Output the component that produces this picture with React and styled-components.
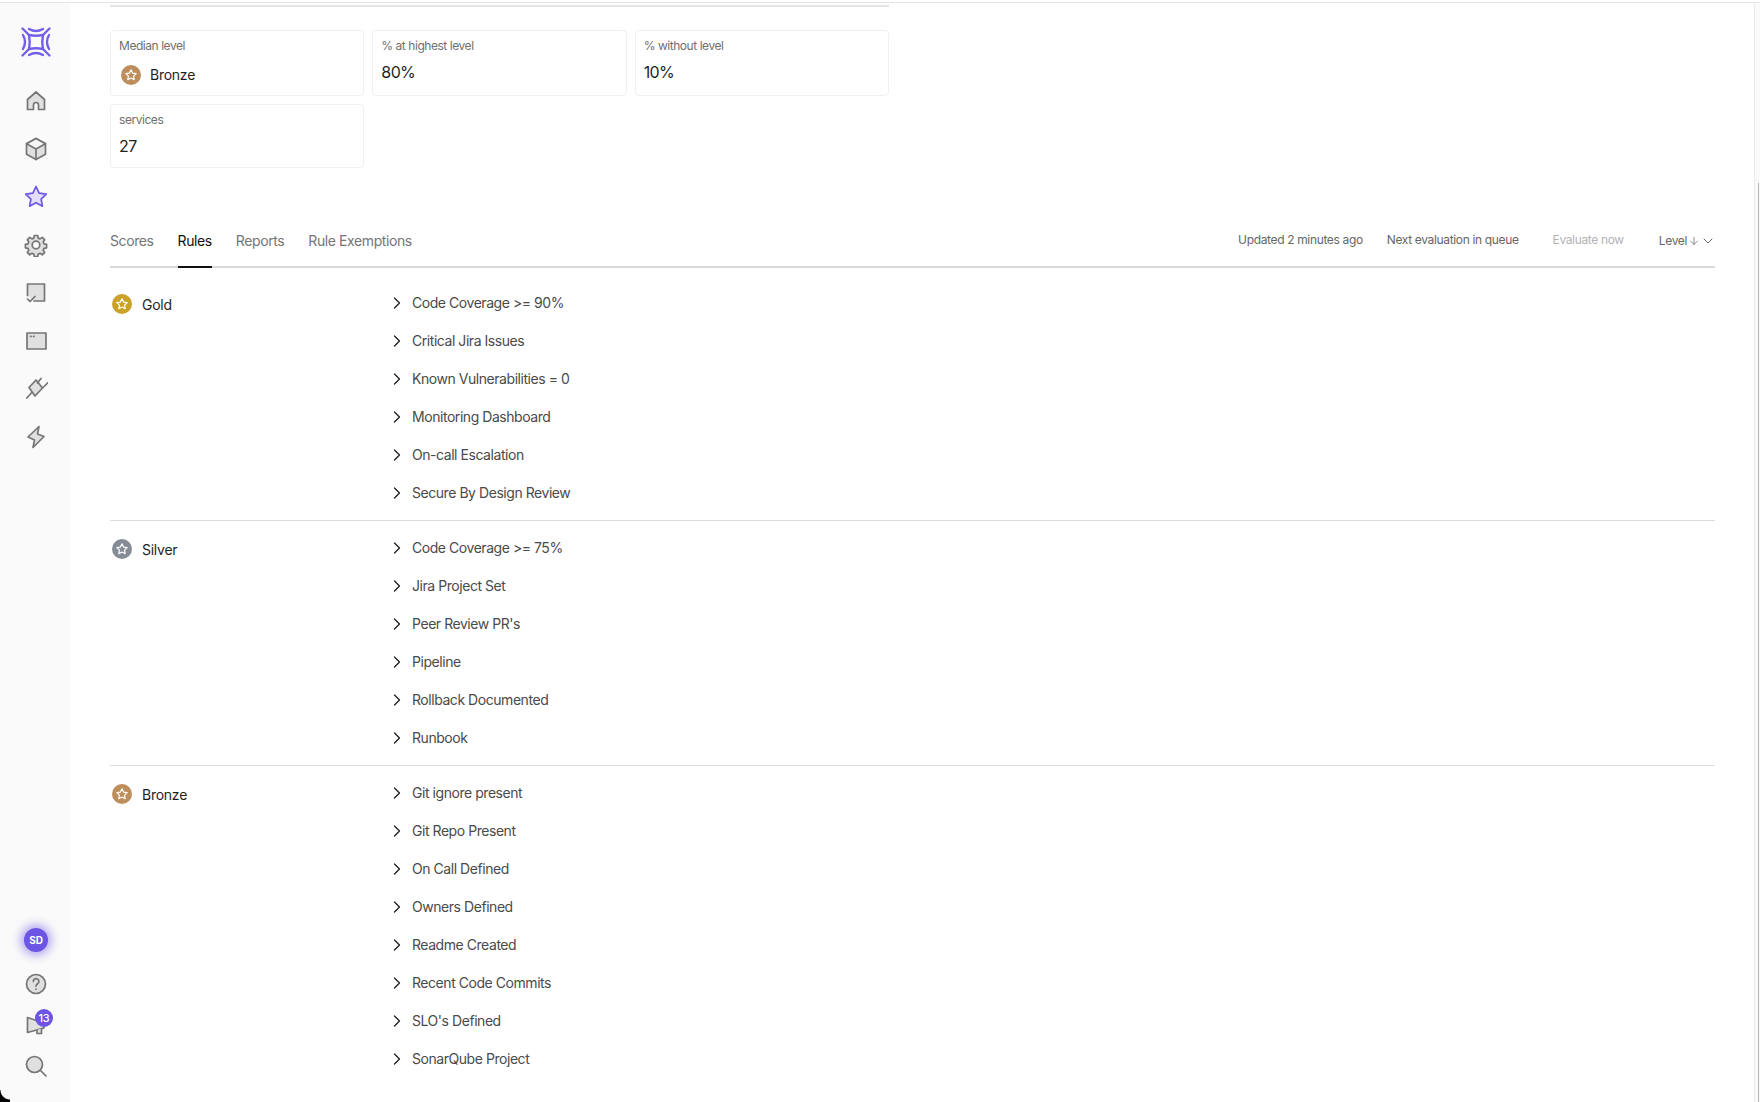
import React from "react";
import styled, { createGlobalStyle } from "styled-components";
import { ChevronRight, ChevronDown, ArrowDown } from "lucide-react";

const Global = createGlobalStyle`
  html, body { margin: 0; padding: 0; background: #fff; height: 100%; overflow: hidden; }
  body { font-family: Inter, "Liberation Sans", sans-serif; color: #1f1f1f; }
`;

const Page = styled.div`
  width: 1760px;
  height: 1102px;
  display: flex;
  overflow: hidden;
  background: #fff;
  position: relative;
  box-sizing: border-box;
  padding-top: 2px;
`;

const Sidebar = styled.aside`
  width: 70px;
  flex: none;
  background: #fafafa;
  display: flex;
  flex-direction: column;
  align-items: center;
  padding-top: 27px;
  padding-left: 2px;
  box-sizing: border-box;
  border-top: 1px solid #e4e4e4;
`;

const Logo = styled.svg`
  width: 30px;
  height: 30px;
  margin-top: -3px;
  margin-bottom: 32px;
`;

const NavList = styled.nav`
  display: flex;
  flex-direction: column;
  align-items: center;
  gap: 24px;
`;

const BottomList = styled.div`
  margin-top: auto;
  margin-bottom: 24px;
  display: flex;
  flex-direction: column;
  align-items: center;
  gap: 18px;
`;

const NavIcon = styled.svg`
  width: 24px;
  height: 24px;
  display: block;
  fill: ${(p) => (p.$active ? "#e4defa" : "#e0e0e0")};
  stroke: ${(p) => (p.$active ? "#6e57e8" : "#757575")};
  stroke-width: 1.7;
  stroke-linejoin: round;
  stroke-linecap: round;
`;

const Avatar = styled.div`
  width: 24px;
  height: 24px;
  margin-bottom: 2px;
  border-radius: 50%;
  background: #6c54e4;
  color: #fff;
  font-size: 10px;
  font-weight: 700;
  letter-spacing: -0.2px;
  display: flex;
  align-items: center;
  justify-content: center;
  box-shadow: 0 0 8px 4px rgba(108, 84, 228, 0.45);
`;

const BadgeWrap = styled.div`
  position: relative;
  width: 24px;
  height: 24px;
  margin-bottom: -2px;
`;

const Badge = styled.span`
  position: absolute;
  top: -5px;
  right: -5px;
  width: 18px;
  height: 18px;
  border-radius: 50%;
  background: #6c54e4;
  color: #fff;
  font-size: 11px;
  font-weight: 500;
  letter-spacing: -0.3px;
  display: flex;
  align-items: center;
  justify-content: center;
`;

const Corner = styled.div`
  position: absolute;
  left: 0;
  bottom: 0;
  width: 10px;
  height: 12px;
  background: radial-gradient(circle at 100% 0, transparent 9px, #000 10px);
`;

const Main = styled.main`
  flex: 1;
  min-width: 0;
  box-sizing: border-box;
  padding: 0 45px 0 40px;
  border-top: 1px solid #e4e4e4;
`;

const TopRule = styled.div`
  width: 779px;
  height: 2px;
  background: #e4e4e4;
  margin-top: 2px;
`;

const Cards = styled.div`
  width: 779px;
  margin-top: 23px;
  display: grid;
  grid-template-columns: repeat(3, 1fr);
  gap: 8px;
`;

const Card = styled.div`
  border: 1px solid #f0f0f0;
  border-radius: 4px;
  height: ${(p) => p.$h}px;
  box-sizing: border-box;
  padding: 6px 8px;
`;

const CardLabel = styled.div`
  font-size: 12px;
  line-height: 18px;
  letter-spacing: -0.45px;
  color: #6f6f6f;
`;

const CardValue = styled.div`
  font-size: 16px;
  line-height: 24px;
  letter-spacing: -0.6px;
  margin-top: 5px;
  color: #1f1f1f;
`;

const LevelRow = styled.div`
  display: flex;
  align-items: center;
  gap: 9px;
  margin-top: 10px;
  padding-left: 2px;
  font-size: 14px;
  line-height: 20px;
  letter-spacing: -0.25px;
  color: #1f1f1f;
`;

const Medal = styled.svg`
  width: 20px;
  height: 20px;
  flex: none;
  display: block;
`;

const TabBar = styled.div`
  margin-top: 57px;
  height: 41px;
  border-bottom: 2px solid #d9d9d9;
  display: flex;
  align-items: stretch;
`;

const Tabs = styled.div`
  display: flex;
  gap: 24px;
`;

const Tab = styled.div`
  font-size: 14px;
  line-height: 20px;
  letter-spacing: -0.4px;
  padding-top: 6px;
  margin-bottom: -2px;
  box-sizing: border-box;
  color: ${(p) => (p.$active ? "#111" : "#757575")};
  border-bottom: 2px solid ${(p) => (p.$active ? "#111" : "transparent")};
`;

const Status = styled.div`
  margin-left: auto;
  display: flex;
  align-items: center;
  font-size: 12px;
  letter-spacing: -0.35px;
  color: #666;
  padding-bottom: 13px;
`;

const StatusText = styled.span`
  margin-left: ${(p) => p.$gap}px;
  color: ${(p) => (p.$muted ? "#b3b3b3" : "#666")};
`;

const SortBy = styled.span`
  display: flex;
  align-items: center;
  margin-left: 35px;
  margin-right: -1px;
  gap: 1px;
  color: #666;
  padding-top: 3px;
`;

const SortCaret = styled(ChevronDown)`
  margin-left: -1px;
`;

const Section = styled.section`
  display: flex;
  padding: ${(p) => (p.$first ? "16px" : "8px")} 0 8px;
  border-bottom: ${(p) => (p.$last ? "none" : "1px solid #dcdcdc")};
`;

const LevelCol = styled.div`
  width: 277px;
  flex: none;
  display: flex;
  align-items: center;
  gap: 10px;
  height: 38px;
  padding-left: 2px;
  padding-top: 2px;
  box-sizing: border-box;
  font-size: 14px;
  letter-spacing: -0.25px;
  color: #1f1f1f;
  align-self: flex-start;
`;

const RuleList = styled.div`
  display: flex;
  flex-direction: column;
`;

const Rule = styled.div`
  height: 38px;
  display: flex;
  align-items: center;
  gap: 5px;
  font-size: 14px;
  letter-spacing: -0.45px;
  color: #4a4a4a;
`;

const RuleName = styled.span`
  padding-bottom: 2px;
`;

const ScrollTrack = styled.div`
  position: absolute;
  right: 0;
  top: 3px;
  bottom: 0;
  width: 5px;
  background: #fafafa;
  border-left: 1px solid #ececec;
`;

const ScrollThumb = styled.div`
  position: absolute;
  top: 180px;
  bottom: 0;
  left: 3px;
  width: 1px;
  background: #b5b5b5;
`;

function MedalIcon({ color }) {
  return (
    <Medal viewBox="0 0 20 20">
      <circle cx="10" cy="10" r="10" fill={color} />
      <path
        d="M10 4.8l1.6 3.3 3.6.5-2.6 2.5.6 3.6-3.2-1.7-3.2 1.7.6-3.6-2.6-2.5 3.6-.5z"
        fill="none"
        stroke="#fff"
        strokeWidth="1.2"
        strokeLinejoin="round"
      />
    </Medal>
  );
}

const navIcons = [
  <path d="M3.500 20.500V10.500L12 3l8.500 7.500v10h-6v-4.500a2.500 2.500 0 0 0-5 0v4.500z" />,
  <>
    <path d="M12 1.500l9.500 5.200v10.600L12 22.500l-9.500-5.200V6.700z" />
    <path d="M2.500 6.700L12 12l9.500-5.300L12 1.500z" fill="#f4f4f4" />
    <path d="M12 12v10.500" fill="none" />
  </>,
  <path d="M12 1.500l3.100 6.600 7.200 1-5.200 5 1.300 7.100-6.400-3.500-6.400 3.500 1.300-7.100-5.200-5 7.200-1z" />,
  <>
    <path d="M10.300 2.500h3.400l.5 2.600 1.900.8 2.200-1.500 2.400 2.400-1.500 2.200.8 1.900 2.600.5v3.400l-2.600.5-.8 1.900 1.500 2.200-2.400 2.400-2.200-1.500-1.900.8-.5 2.600h-3.400l-.5-2.600-1.900-.8-2.200 1.500-2.400-2.400 1.500-2.200-.8-1.900-2.600-.5v-3.400l2.600-.5.800-1.900-1.500-2.200 2.400-2.400 2.200 1.500 1.900-.8z" />
    <circle cx="12" cy="12" r="3.800" fill="#fafafa" />
  </>,
  <>
    <path d="M3.500 14.500V3h17v17H10L3.500 14.500z" stroke="none" />
    <path d="M10 20h10.500V3H3.500v11.500" fill="none" />
    <path d="M3.500 18l2.500 2.500 5-5" fill="none" />
  </>,
  <>
    <rect x="3" y="4" width="19" height="16" />
    <path d="M6.500 7.300h.6M9.500 7.300h.6" fill="none" />
  </>,
  <>
    <path d="M5 10.500L12 3l6.500 8-7.500 8z" />
    <path d="M2.800 21l4.500-5M13.500 6L17 1.500M18.500 11L23.500 6" fill="none" />
  </>,
  <path d="M15 1.500L4 12l6.500 3L9 22.500 20 11.500 13.500 9z" />,
];

const groups = [
  { name: "Gold", color: "#c9a227", rules: ["Code Coverage >= 90%", "Critical Jira Issues", "Known Vulnerabilities = 0", "Monitoring Dashboard", "On-call Escalation", "Secure By Design Review"] },
  { name: "Silver", color: "#868c96", rules: ["Code Coverage >= 75%", "Jira Project Set", "Peer Review PR's", "Pipeline", "Rollback Documented", "Runbook"] },
  { name: "Bronze", color: "#bd8d5b", rules: ["Git ignore present", "Git Repo Present", "On Call Defined", "Owners Defined", "Readme Created", "Recent Code Commits", "SLO's Defined", "SonarQube Project"] },
];

export default function App() {
  return (
    <>
      <Global />
      <Page>
        <Sidebar>
          <Logo viewBox="0 0 30 30" fill="none" stroke="#7360ea" strokeWidth="2.4" strokeLinecap="round">
            <path d="M1.500 1.500L8 8M28.500 1.500L22 8M1.500 28.500L8 22M28.500 28.500L22 22" />
            <path d="M8 8q7 1.500 14 0q-1.500 7 0 14q-7-1.500-14 0q1.500-7 0-14z" />
            <path d="M8 2q7 4 14 0M8 28q7-4 14 0M2 8q4 7 0 14M28 8q-4 7 0 14" />
          </Logo>
          <NavList>
            {navIcons.map((icon, i) => (
              <NavIcon key={i} viewBox="0 0 24 24" $active={i === 2}>{icon}</NavIcon>
            ))}
          </NavList>
          <BottomList>
            <Avatar>SD</Avatar>
            <NavIcon viewBox="0 0 24 24">
              <circle cx="12" cy="12" r="9.500" />
              <path d="M9.300 9.500a2.800 2.800 0 1 1 4.300 2.300c-1 .7-1.600 1.200-1.600 2.300M12 17v.3" fill="none" />
            </NavIcon>
            <BadgeWrap>
              <NavIcon viewBox="0 0 24 24">
                <path d="M3.500 3.500L20 9v5L3.500 18.500z" />
                <path d="M13 16v3.500h4.500V14.500" />
              </NavIcon>
              <Badge>13</Badge>
            </BadgeWrap>
            <NavIcon viewBox="0 0 24 24">
              <circle cx="10.500" cy="10.500" r="8" />
              <path d="M16.500 16.500L22 22" fill="none" />
            </NavIcon>
          </BottomList>
        </Sidebar>
        <Main>
          <TopRule />
          <Cards>
            <Card $h={66}>
              <CardLabel>Median level</CardLabel>
              <LevelRow><MedalIcon color="#bd8d5b" />Bronze</LevelRow>
            </Card>
            <Card $h={66}>
              <CardLabel>% at highest level</CardLabel>
              <CardValue>80%</CardValue>
            </Card>
            <Card $h={66}>
              <CardLabel>% without level</CardLabel>
              <CardValue>10%</CardValue>
            </Card>
            <Card $h={64}>
              <CardLabel>services</CardLabel>
              <CardValue>27</CardValue>
            </Card>
          </Cards>
          <TabBar>
            <Tabs>
              <Tab>Scores</Tab>
              <Tab $active>Rules</Tab>
              <Tab>Reports</Tab>
              <Tab>Rule Exemptions</Tab>
            </Tabs>
            <Status>
              <StatusText>Updated 2 minutes ago</StatusText>
              <StatusText $gap={24}>Next evaluation in queue</StatusText>
              <StatusText $gap={34} $muted>Evaluate now</StatusText>
              <SortBy>
                Level
                <ArrowDown size={12} strokeWidth={1.5} />
                <SortCaret size={16} strokeWidth={1.5} />
              </SortBy>
            </Status>
          </TabBar>
          {groups.map((g, i) => (
            <Section key={g.name} $first={i === 0} $last={i === 2}>
              <LevelCol>
                <MedalIcon color={g.color} />
                {g.name}
              </LevelCol>
              <RuleList>
                {g.rules.map((r) => (
                  <Rule key={r}>
                    <ChevronRight size={20} strokeWidth={1.6} color="#222" />
                    <RuleName>{r}</RuleName>
                  </Rule>
                ))}
              </RuleList>
            </Section>
          ))}
        </Main>
        <ScrollTrack><ScrollThumb /></ScrollTrack>
        <Corner />
      </Page>
    </>
  );
}
